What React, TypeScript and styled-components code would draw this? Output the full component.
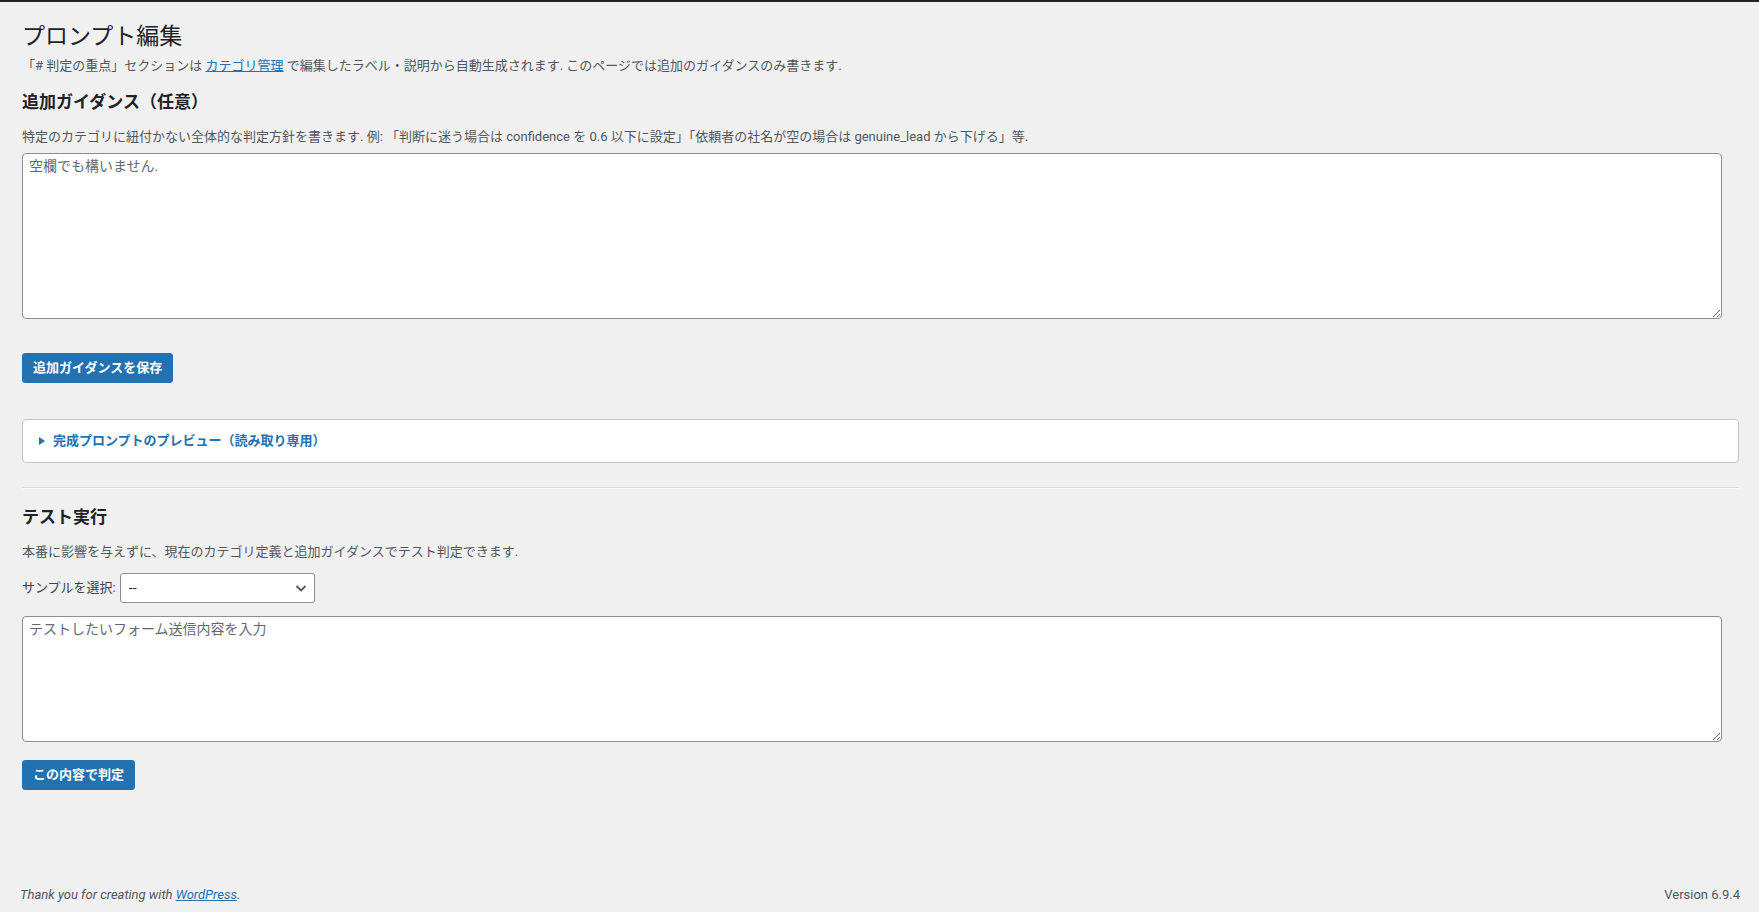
import styled, { createGlobalStyle } from 'styled-components'

const GlobalStyle = createGlobalStyle`
  html, body {
    margin: 0;
    padding: 0;
    background: #f0f0f1;
  }
  body {
    font-family: "Segoe UI", Roboto, "Noto Sans CJK JP", sans-serif;
    font-size: 13px;
    line-height: 1.4em;
    color: #3c434a;
  }
  * {
    box-sizing: border-box;
  }
`

const Page = styled.div`
  min-height: 100vh;
  display: flex;
  flex-direction: column;
`

const AdminEdge = styled.div`
  height: 2px;
  flex-shrink: 0;
  background: #1d2327;
`

const Wrap = styled.main`
  margin: 0 20px 0 22px;
`

const Title = styled.h1`
  margin: 20px 0 0;
  font-size: 23px;
  font-weight: 400;
  line-height: 30px;
  color: #1d2327;
`

const Text = styled.p<{ $top: number }>`
  margin: ${(p) => p.$top}px 0 0;
  font-size: 13px;
  line-height: 20px;
  color: #50575e;
`

const Link = styled.a`
  color: #2271b1;
  text-decoration: underline;
`

const SectionTitle = styled.h2<{ $top: number }>`
  margin: ${(p) => p.$top}px 0 0;
  font-size: 17px;
  font-weight: 600;
  line-height: 24px;
  color: #1d2327;
`

const TextArea = styled.textarea<{ $top: number }>`
  display: block;
  width: 99%;
  margin: ${(p) => p.$top}px 0 0;
  padding: 2px 6px;
  border: 1px solid #8c8f94;
  border-radius: 4px;
  background: #fff;
  font-family: inherit;
  font-size: 14px;
  line-height: 20px;
  color: #2c3338;
  &::placeholder {
    color: #646970;
  }
`

const PrimaryButton = styled.button<{ $top: number }>`
  display: inline-block;
  margin: ${(p) => p.$top}px 0 0;
  min-height: 30px;
  padding: 0 10px;
  border: 1px solid #2271b1;
  border-radius: 3px;
  background: #2271b1;
  color: #fff;
  font-family: inherit;
  font-size: 13px;
  font-weight: 600;
  line-height: 28px;
  cursor: pointer;
`

const Preview = styled.details`
  margin-top: 36px;
  padding: 11px 16px;
  border: 1px solid #c3c4c7;
  border-radius: 4px;
  background: #fff;
`

const PreviewSummary = styled.summary`
  display: flex;
  align-items: center;
  gap: 8px;
  list-style: none;
  font-size: 13px;
  font-weight: 600;
  line-height: 20px;
  color: #2271b1;
  cursor: pointer;
  &::-webkit-details-marker {
    display: none;
  }
  &::before {
    content: '';
    width: 0;
    height: 0;
    border-left: 6px solid #2271b1;
    border-top: 4px solid transparent;
    border-bottom: 4px solid transparent;
  }
`

const Divider = styled.hr`
  margin: 24px 0 0;
  border: 0;
  border-top: 1px solid #dcdcde;
  border-bottom: 1px solid #f6f7f7;
`

const SampleRow = styled.div`
  display: flex;
  align-items: center;
  gap: 4px;
  margin-top: 11px;
`

const SampleLabel = styled.label`
  font-size: 13px;
  line-height: 20px;
  color: #3c434a;
`

const SelectWrap = styled.span`
  position: relative;
  display: inline-flex;
`

const Select = styled.select`
  width: 195px;
  height: 30px;
  padding: 0 24px 0 8px;
  border: 1px solid #8c8f94;
  border-radius: 3px;
  background: #fff;
  appearance: none;
  font-family: inherit;
  font-size: 14px;
  color: #2c3338;
`

const Chevron = styled.svg`
  position: absolute;
  right: 6px;
  top: 7px;
  width: 16px;
  height: 16px;
  pointer-events: none;
`

const Footer = styled.footer`
  display: flex;
  justify-content: space-between;
  margin-top: auto;
  padding: 12px 19px 7px 20px;
  font-size: 13px;
  line-height: 20px;
  color: #50575e;
`

const Thanks = styled.span`
  font-style: italic;
`

export default function App() {
  return (
    <Page>
      <GlobalStyle />
      <AdminEdge />
      <Wrap>
        <Title>プロンプト編集</Title>
        <Text $top={4}>
          「# 判定の重点」セクションは <Link href="#">カテゴリ管理</Link>{' '}
          で編集したラベル・説明から自動生成されます. このページでは追加のガイダンスのみ書きます.
        </Text>

        <SectionTitle $top={14}>追加ガイダンス（任意）</SectionTitle>
        <Text $top={13}>
          特定のカテゴリに紐付かない全体的な判定方針を書きます. 例: 「判断に迷う場合は confidence を 0.6
          以下に設定」「依頼者の社名が空の場合は genuine_lead から下げる」等.
        </Text>
        <TextArea $top={6} rows={8} placeholder="空欄でも構いません." />
        <PrimaryButton $top={34} type="button">
          追加ガイダンスを保存
        </PrimaryButton>

        <Preview>
          <PreviewSummary>完成プロンプトのプレビュー（読み取り専用）</PreviewSummary>
        </Preview>

        <Divider />

        <SectionTitle $top={16}>テスト実行</SectionTitle>
        <Text $top={13}>本番に影響を与えずに、現在のカテゴリ定義と追加ガイダンスでテスト判定できます.</Text>
        <SampleRow>
          <SampleLabel htmlFor="sample">サンプルを選択:</SampleLabel>
          <SelectWrap>
            <Select id="sample" defaultValue="">
              <option value="">--</option>
            </Select>
            <Chevron viewBox="0 0 16 16" fill="none">
              <path d="M3.5 6l4.5 4.5L12.5 6" stroke="#50575e" strokeWidth="1.8" />
            </Chevron>
          </SelectWrap>
        </SampleRow>
        <TextArea $top={13} rows={6} placeholder="テストしたいフォーム送信内容を入力" />
        <PrimaryButton $top={18} type="button">
          この内容で判定
        </PrimaryButton>
      </Wrap>

      <Footer>
        <Thanks>
          Thank you for creating with <Link href="#">WordPress</Link>.
        </Thanks>
        <span>Version 6.9.4</span>
      </Footer>
    </Page>
  )
}
